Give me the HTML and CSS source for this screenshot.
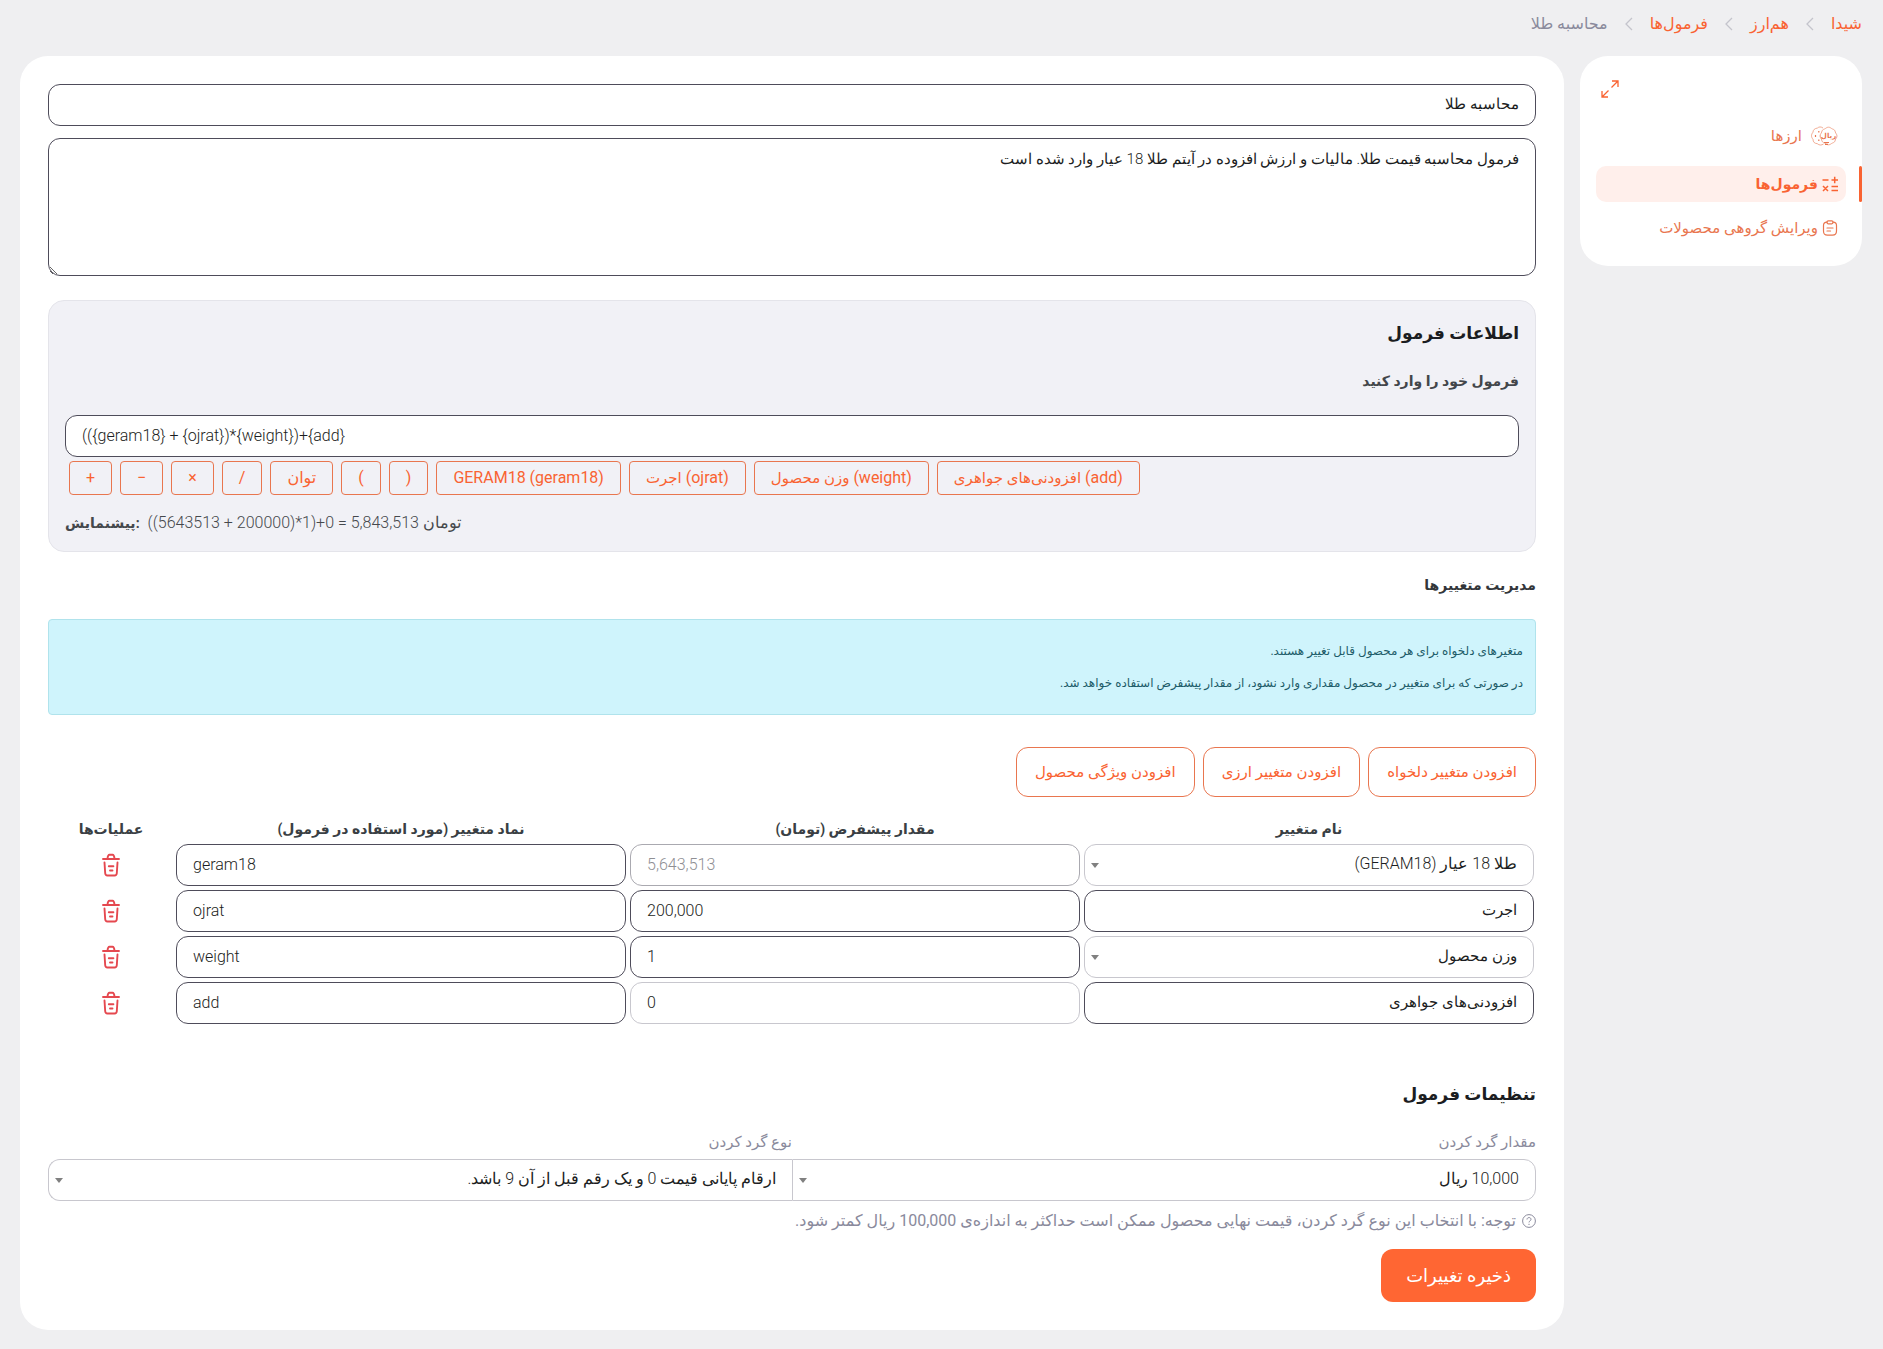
FILE: index.html
```html
<!DOCTYPE html>
<html lang="fa" dir="rtl">
<head>
<meta charset="utf-8">
<meta name="viewport" content="width=device-width, initial-scale=1">
<title>محاسبه طلا</title>
<link rel="stylesheet" href="styles.css">
</head>
<body>
<svg class="sprite" aria-hidden="true">
  <symbol id="chevron" viewBox="0 0 10 16"><path d="M8 2 2 8l6 6" fill="none" stroke="currentColor" stroke-width="1.3"/></symbol>
  <symbol id="trash" viewBox="0 0 20 24"><g fill="none" stroke="currentColor" stroke-width="1.9" stroke-linecap="round" stroke-linejoin="round"><path d="M2 6h16M6.500 5.500c.3-2.400.8-3.700 1.900-3.700h3.200c1.100 0 1.600 1.300 1.900 3.700M3.500 9.500l.7 10.800c.1 1.500.8 2.200 2.200 2.200h7.200c1.400 0 2.100-.7 2.200-2.200l.7-10.800M7.800 13.200h4.600M9 17.500h2.500"/></g></symbol>
</svg>

<nav class="breadcrumb" aria-label="مسیر صفحه">
  <a href="#">شیدا</a>
  <svg class="chevron"><use href="#chevron"/></svg>
  <a href="#">هم‌ارز</a>
  <svg class="chevron"><use href="#chevron"/></svg>
  <a href="#">فرمول‌ها</a>
  <svg class="chevron"><use href="#chevron"/></svg>
  <span>محاسبه طلا</span>
</nav>

<div class="layout">
  <aside class="sidebar">
    <button class="expand" type="button" aria-label="تغییر اندازه منو">
      <svg width="18" height="18" viewBox="0 0 18 18" fill="none" stroke="currentColor" stroke-width="1.3"><path d="M10.500 7.500 17 1M11 1h6v6M7.500 10.500 1 17M1 11v6h6"/></svg>
    </button>
    <a class="menu-item currencies" href="#">
      <svg width="28" height="20" viewBox="0 0 28 20" fill="none" stroke="currentColor"><g stroke-width=".8" opacity=".75"><path d="M13 2C11 .6 9 .6 7.500 2 4.500 2.500 3 4 3 6.200 1 8.500 1 11 3 13.300c0 2.700 1.600 4.200 4.300 4.400 2 1.700 4.200 1.700 6.200.3"/><path d="M18.500 1.200c2 0 2.600 1.300 4 1.800 1.800.6 2.600 1.400 2.800 3 .3 1.500 1.700 2.200 1.700 4s-1.400 2.500-1.700 4c-.2 1.600-1 2.400-2.800 3-1.400.5-2 1.800-4 1.800s-2.600-1.300-4-1.800c-1.800-.6-2.600-1.400-2.800-3-.3-1.500-1.700-2.200-1.700-4s1.400-2.500 1.700-4c.2-1.600 1-2.400 2.800-3 1.400-.5 2-1.800 4-1.800Z"/></g><path d="M5.500 9v2M8.800 5v1.500M8.800 13.500V15M10 10h.500M14 16.500h5M15 18.300h3" stroke-width="1.2"/><text class="coin" x="18.500" y="12">ریال</text></svg>
      <span>ارزها</span>
    </a>
    <a class="menu-item active" href="#" aria-current="page">
      <svg width="16" height="16" viewBox="0 0 16 16" fill="none" stroke="currentColor" stroke-width="1.500"><path d="M9.500 4h6.500M12.700.800v6.400M.500 4h6M9.500 10.500h6.500M9.500 14.500h6.500M1 10l5 5M6 10l-5 5"/></svg>
      <span>فرمول‌ها</span>
    </a>
    <a class="menu-item" href="#">
      <svg width="16" height="16" viewBox="0 0 16 16" fill="none" stroke="currentColor" stroke-width="1.200" stroke-linecap="round"><path d="M5 2.200C2.500 2.300 1.500 3.200 1.500 5.500V11c0 3 1 4.200 4 4.200h5c3 0 4-1.200 4-4.200V5.500c0-2.300-1-3.200-3.500-3.300"/><rect x="5" y=".800" width="6" height="3" rx="1.200"/><path d="M5 8h6M5 11h3.500"/></svg>
      <span>ویرایش گروهی محصولات</span>
    </a>
  </aside>

  <main class="card">
    <form class="form">
      <input class="field persian" type="text" value="محاسبه طلا" aria-label="نام فرمول">
      <textarea class="field persian description" aria-label="توضیحات فرمول">فرمول محاسبه قیمت طلا. مالیات و ارزش افزوده در آیتم طلا 18 عیار وارد شده است</textarea>

      <section class="formula">
        <h2>اطلاعات فرمول</h2>
        <label class="formula-label" for="formula">فرمول خود را وارد کنید</label>
        <input class="field" id="formula" type="text" dir="ltr" value="(({geram18} + {ojrat})*{weight})+{add}">
        <div class="tokens" dir="ltr">
          <button type="button">+</button>
          <button type="button">−</button>
          <button type="button">×</button>
          <button type="button">/</button>
          <button type="button">توان</button>
          <button type="button">(</button>
          <button type="button">)</button>
          <button type="button">GERAM18 (geram18)</button>
          <button type="button"><span class="persian">اجرت</span> (ojrat)</button>
          <button type="button"><span class="persian">وزن محصول</span> (weight)</button>
          <button type="button"><span class="persian">افزودنی‌های جواهری</span> (add)</button>
        </div>
        <p class="preview" dir="ltr"><strong>پیشنمایش:</strong><span>((5643513 + 200000)*1)+0 = 5,843,513 تومان</span></p>
      </section>

      <h3>مدیریت متغییرها</h3>
      <div class="notice">
        <p>متغیرهای دلخواه برای هر محصول قابل تغییر هستند.</p>
        <p>در صورتی که برای متغییر در محصول مقداری وارد نشود، از مقدار پیشفرض استفاده خواهد شد.</p>
      </div>
      <div class="actions">
        <button type="button">افزودن متغییر دلخواه</button>
        <button type="button">افزودن متغییر ارزی</button>
        <button type="button">افزودن ویژگی محصول</button>
      </div>

      <table class="variables">
        <thead>
          <tr><th>نام متغییر</th><th>مقدار پیشفرض (تومان)</th><th>نماد متغییر (مورد استفاده در فرمول)</th><th class="ops">عملیات‌ها</th></tr>
        </thead>
        <tbody>
          <tr>
            <td><div class="select"><select class="field light" aria-label="نام متغییر"><option>طلا 18 عیار (GERAM18)</option></select></div></td>
            <td><input class="field disabled" type="text" dir="ltr" value="5,643,513" disabled aria-label="مقدار پیشفرض"></td>
            <td><input class="field" type="text" dir="ltr" value="geram18" aria-label="نماد متغییر"></td>
            <td><button class="delete" type="button" aria-label="حذف"><svg width="20" height="24"><use href="#trash"/></svg></button></td>
          </tr>
          <tr>
            <td><input class="field persian" type="text" value="اجرت" aria-label="نام متغییر"></td>
            <td><input class="field" type="text" dir="ltr" value="200,000" aria-label="مقدار پیشفرض"></td>
            <td><input class="field" type="text" dir="ltr" value="ojrat" aria-label="نماد متغییر"></td>
            <td><button class="delete" type="button" aria-label="حذف"><svg width="20" height="24"><use href="#trash"/></svg></button></td>
          </tr>
          <tr>
            <td><div class="select"><select class="field persian light" aria-label="نام متغییر"><option>وزن محصول</option></select></div></td>
            <td><input class="field" type="text" dir="ltr" value="1" aria-label="مقدار پیشفرض"></td>
            <td><input class="field" type="text" dir="ltr" value="weight" aria-label="نماد متغییر"></td>
            <td><button class="delete" type="button" aria-label="حذف"><svg width="20" height="24"><use href="#trash"/></svg></button></td>
          </tr>
          <tr>
            <td><input class="field persian" type="text" value="افزودنی‌های جواهری" aria-label="نام متغییر"></td>
            <td><input class="field light" type="text" dir="ltr" value="0" aria-label="مقدار پیشفرض"></td>
            <td><input class="field" type="text" dir="ltr" value="add" aria-label="نماد متغییر"></td>
            <td><button class="delete" type="button" aria-label="حذف"><svg width="20" height="24"><use href="#trash"/></svg></button></td>
          </tr>
        </tbody>
      </table>

      <h2 class="settings-title">تنظیمات فرمول</h2>
      <div class="rounding">
        <div class="round-field">
          <label for="amount">مقدار گرد کردن</label>
          <div class="select"><select class="field light" id="amount"><option>10,000 ریال</option></select></div>
        </div>
        <div class="round-field">
          <label for="kind">نوع گرد کردن</label>
          <div class="select"><select class="field light" id="kind"><option>ارقام پایانی قیمت 0 و یک رقم قبل از آن 9 باشد.</option></select></div>
        </div>
      </div>
      <p class="hint">
        <svg width="14" height="14" viewBox="0 0 14 14" fill="none" stroke="currentColor"><circle cx="7" cy="7" r="6.400"/><path d="M5 5.500c0-2.600 4-2.500 4-.2C9 6.900 7 6.900 7 8.400M7 9.800v1.200"/></svg>
        <span>توجه: با انتخاب این نوع گرد کردن، قیمت نهایی محصول ممکن است حداکثر به اندازه‌ی 100,000 ریال کمتر شود.</span>
      </p>
      <button class="save" type="submit">ذخیره تغییرات</button>
    </form>
  </main>
</div>
</body>
</html>
```
FILE: styles.css
```css
:root {
  --accent: #f96332;
  --accent-line: #e9764f;
  --ink: #1b1d21;
  --muted: #8a8a9c;
  --line: #4e4c5a;
  --line-light: #c8c7ce;
}

* {
  box-sizing: border-box;
}

body {
  margin: 0;
  padding: 0 21px 19px 20px;
  background: #efeff1;
  color: var(--ink);
  font: 400 16px/24px Roboto, "DejaVu Sans", sans-serif;
}

button,
input,
select,
textarea {
  font: inherit;
  color: inherit;
}

button {
  cursor: pointer;
}

a {
  color: var(--accent);
  text-decoration: none;
}

h2,
h3,
p {
  margin: 0;
}

.persian {
  font-size: 15px;
}

.sprite {
  display: none;
}

.breadcrumb {
  display: flex;
  align-items: center;
  gap: 16px;
  height: 56px;
  padding-bottom: 8px;
  color: var(--muted);
}

.chevron {
  width: 10px;
  height: 16px;
  color: #c4c4cc;
}

.layout {
  display: flex;
  align-items: flex-start;
  gap: 16px;
}

.sidebar {
  flex: 0 0 282px;
  display: flex;
  flex-direction: column;
  gap: 8px;
  padding: 16px 16px 20px;
  border-radius: 28px;
  background: #fff;
}

.expand {
  align-self: flex-end;
  display: grid;
  place-items: center;
  width: 28px;
  height: 34px;
  padding: 0;
  border: 0;
  background: none;
  color: var(--accent);
}

.menu-item {
  position: relative;
  display: flex;
  align-items: center;
  gap: 4px;
  height: 36px;
  padding: 0 8px;
  border-radius: 10px;
  color: var(--accent-line);
  font-size: 15px;
}

.menu-item.currencies {
  gap: 8px;
  height: 44px;
}

.coin {
  fill: currentColor;
  stroke: none;
  font-size: 7px;
  font-weight: 700;
  text-anchor: middle;
}

.menu-item.active {
  background: #ffefeb;
  color: var(--accent);
  font-size: 14px;
  font-weight: 700;
}

.menu-item.active::before {
  content: "";
  position: absolute;
  inset: 0 -16px 0 auto;
  width: 3px;
  border-radius: 2px;
  background: var(--accent);
}

.card {
  flex: 1;
  min-width: 0;
  padding: 28px;
  border-radius: 28px;
  background: #fff;
}

.field {
  display: block;
  width: 100%;
  height: 42px;
  padding: 0 16px 2px;
  border: 1px solid var(--line);
  border-radius: 12px;
  background: #fff;
  font-weight: 300;
  appearance: none;
}

.field.light {
  border-color: var(--line-light);
}

.field.disabled {
  border-color: #aaa9b0;
  color: #8f8f94;
}

.description {
  height: 138px;
  margin-top: 12px;
  padding: 8px 16px;
  resize: vertical;
}

.formula {
  margin-top: 24px;
  padding: 16px;
  border: 1px solid #e4e4ea;
  border-radius: 16px;
  background: #f1f1f6;
}

h2 {
  font-size: 17px;
  line-height: 32px;
}

.formula-label {
  display: block;
  margin: 20px 0 22px;
  color: #43464a;
  font-size: 14px;
  font-weight: 700;
}

.tokens {
  display: flex;
  flex-wrap: wrap;
  gap: 8px;
  padding: 4px;
}

.tokens button {
  height: 34px;
  padding: 0 16px;
  border: 1px solid var(--accent-line);
  border-radius: 4px;
  background: none;
  color: var(--accent);
}

.preview {
  display: flex;
  gap: 8px;
  margin-top: 12px;
  color: #45484c;
  font-weight: 300;
}

.preview strong {
  font-size: 14px;
  font-weight: 700;
}

h3 {
  margin: 21px 0 22px;
  color: #33363a;
  font-size: 14px;
  line-height: 24px;
}

.notice {
  padding: 15px 12px;
  border: 1px solid #b0e3ec;
  border-radius: 4px;
  background: #cff4fc;
  color: #1d5c69;
  font-size: 12px;
  line-height: 32px;
}

.actions {
  display: flex;
  gap: 8px;
  margin-top: 32px;
}

.actions button {
  height: 50px;
  padding: 0 18px;
  border: 1px solid var(--accent-line);
  border-radius: 12px;
  background: #fff;
  color: var(--accent);
  font-size: 15px;
}

.variables {
  width: 100%;
  margin-top: 18px;
  border-collapse: collapse;
  table-layout: fixed;
}

.variables th {
  height: 27px;
  padding: 0;
  color: #3a3f44;
  font-size: 14px;
  font-weight: 700;
}

.variables td {
  padding: 2px;
}

.variables .ops {
  width: 126px;
}

.delete {
  display: grid;
  place-items: center;
  margin: 0 auto;
  padding: 0;
  border: 0;
  background: none;
  color: #e5484f;
}

.select {
  position: relative;
}

.select::after {
  content: "";
  position: absolute;
  top: 19px;
  left: 7px;
  border: 4px solid transparent;
  border-top: 5px solid #808080;
  border-bottom: 0;
  pointer-events: none;
}

.settings-title {
  margin-top: 52px;
}

.rounding {
  display: flex;
  margin-top: 20px;
}

.round-field {
  flex: 1;
}

.round-field label {
  display: block;
  height: 29px;
  color: var(--muted);
  font-size: 15px;
}

.round-field:first-child .field {
  border-radius: 0 12px 12px 0;
}

.round-field:last-child .field {
  border-right: 0;
  border-radius: 12px 0 0 12px;
}

.hint {
  display: flex;
  align-items: center;
  gap: 6px;
  margin-top: 8px;
  color: var(--muted);
}

.save {
  height: 53px;
  margin-top: 16px;
  padding: 0 25px;
  border: 0;
  border-radius: 12px;
  background: #ff6633;
  color: #fff;
  font-size: 18px;
}
```
